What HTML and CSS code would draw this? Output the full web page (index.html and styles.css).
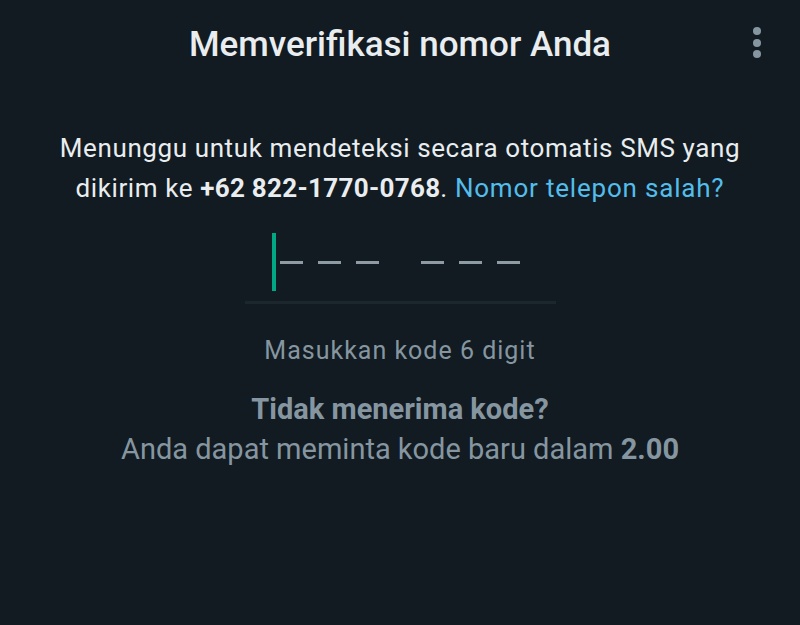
FILE: index.html
```html
<!DOCTYPE html>
<html lang="id">
<head>
<meta charset="utf-8">
<link rel="stylesheet" href="styles.css">
</head>
<body>
<div class="screen">
  <header class="topbar">
    <h1 class="title">Memverifikasi nomor Anda</h1>
    <div class="menu" aria-label="menu">
      <span class="dot"></span><span class="dot"></span><span class="dot"></span>
    </div>
  </header>
  <p class="desc">Menunggu untuk mendeteksi secara otomatis SMS yang<br>dikirim ke <b>+62 822-1770-0768</b>. <span class="link">Nomor telepon salah?</span></p>
  <div class="code">
    <div class="slots">
      <span class="cursor"></span>
      <div class="group"><span class="dash"></span><span class="dash"></span><span class="dash"></span></div>
      <div class="group"><span class="dash"></span><span class="dash"></span><span class="dash"></span></div>
    </div>
    <div class="underline"></div>
  </div>
  <p class="hint">Masukkan kode 6 digit</p>
  <p class="resend"><b>Tidak menerima kode?</b><br>Anda dapat meminta kode baru dalam <b>2.00</b></p>
</div>
</body>
</html>
```
FILE: styles.css
```css
html, body {
  margin: 0;
  padding: 0;
  background: #121b22;
}
.screen {
  width: 800px;
  height: 625px;
  background: #121b22;
  font-family: Roboto, "Noto Sans", sans-serif;
  display: flex;
  flex-direction: column;
  align-items: center;
}
.topbar {
  width: 100%;
  height: 90px;
  display: flex;
  align-items: center;
  justify-content: center;
  position: relative;
}
.title {
  margin: 0;
  margin-top: -2px;
  font-size: 35px;
  font-weight: 500;
  color: #e9edef;
}
.menu {
  position: absolute;
  right: 39px;
  top: 27px;
  display: flex;
  flex-direction: column;
  gap: 3.5px;
}
.dot {
  width: 8px;
  height: 8px;
  border-radius: 50%;
  background: #8696a0;
}
.desc {
  margin: 37.5px 0 0;
  font-size: 26px;
  line-height: 40px;
  letter-spacing: 0.6px;
  color: #e9edef;
  text-align: center;
}
.desc b { font-weight: 700; letter-spacing: 0.3px; }
.link { color: #53bdeb; letter-spacing: 0.8px; }
.code {
  margin-top: 25.5px;
  width: 311px;
  display: flex;
  flex-direction: column;
  align-items: center;
}
.slots {
  height: 58px;
  display: flex;
  align-items: center;
  margin-left: -9px;
}
.cursor {
  width: 4px;
  height: 58px;
  background: #00a884;
  margin-right: 4px;
}
.group {
  display: flex;
  gap: 15px;
}
.group + .group { margin-left: 42px; }
.dash {
  width: 23px;
  height: 3px;
  background: #8f9ba2;
  margin-top: 1px;
}
.underline {
  margin-top: 10px;
  width: 311px;
  height: 3px;
  background: #1b262d;
}
.hint {
  margin: 30.5px 0 0;
  font-size: 25px;
  line-height: 32px;
  letter-spacing: 1px;
  color: #8696a0;
}
.resend {
  margin: 22.5px 0 0;
  font-size: 29px;
  line-height: 40px;
  color: #8696a0;
  text-align: center;
}
.resend b { font-weight: 700; }
```
